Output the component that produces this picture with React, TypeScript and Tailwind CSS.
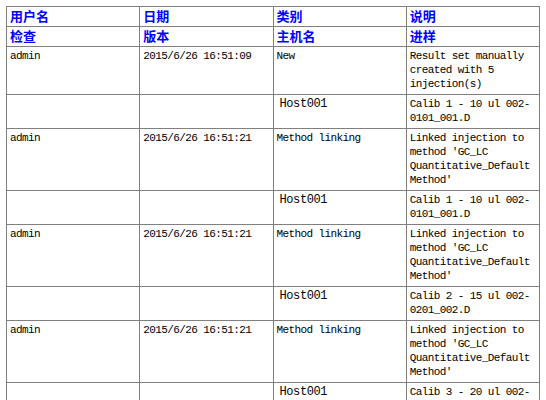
import React from 'react';

type Row = {
  user?: string;
  date?: string;
  kind: React.ReactNode;
  note: React.ReactNode;
  host?: boolean;
};

const linked = (
  <>
    Linked injection to method 'GC_LC Quantitative_Default Method'
  </>
);

const rows: Row[] = [
  { user: 'admin', date: '2015/6/26 16:51:09', kind: 'New', note: 'Result set manually created with 5 injection(s)' },
  { kind: 'Host001', host: true, note: <>Calib 1 - 10 ul 002-<wbr />0101_001.D</> },
  { user: 'admin', date: '2015/6/26 16:51:21', kind: 'Method linking', note: linked },
  { kind: 'Host001', host: true, note: <>Calib 1 - 10 ul 002-<wbr />0101_001.D</> },
  { user: 'admin', date: '2015/6/26 16:51:21', kind: 'Method linking', note: linked },
  { kind: 'Host001', host: true, note: <>Calib 2 - 15 ul 002-<wbr />0201_002.D</> },
  { user: 'admin', date: '2015/6/26 16:51:21', kind: 'Method linking', note: linked },
  { kind: 'Host001', host: true, note: <>Calib 3 - 20 ul 002-<wbr />0301_003.D</> },
];

const headTop = ['用户名', '日期', '类别', '说明'];
const headBottom = ['检查', '版本', '主机名', '进样'];

const th = "border border-[#808080] px-[3px] pt-[2px] pb-[3px] text-left align-top font-bold text-[13px] leading-[14px] text-[#0000ff] [font-family:'Noto_Sans_CJK_SC',sans-serif]";
const td = "border border-[#808080] px-[3px] pt-[2px] pb-[3px] align-top text-[11px] leading-[14px] tracking-[-0.6px] text-black [font-family:'Liberation_Mono',monospace]";

export default function App() {
  return (
    <div className="bg-white min-h-[400px] p-[6px]">
      <table className="w-full table-fixed border-collapse">
        <thead>
          <tr>
            {headTop.map((h) => (
              <th key={h} className={th}>{h}</th>
            ))}
          </tr>
          <tr>
            {headBottom.map((h) => (
              <th key={h} className={th}>{h}</th>
            ))}
          </tr>
        </thead>
        <tbody>
          {rows.map((r, i) => (
            <tr key={i}>
              <td className={td}>{r.user}</td>
              <td className={td}>{r.date}</td>
              <td className={td}>
                {r.host ? (
                  <span className="pl-[3px] text-[12px] tracking-[-0.4px]">{r.kind}</span>
                ) : (
                  r.kind
                )}
              </td>
              <td className={td}>{r.note}</td>
            </tr>
          ))}
        </tbody>
      </table>
    </div>
  );
}
